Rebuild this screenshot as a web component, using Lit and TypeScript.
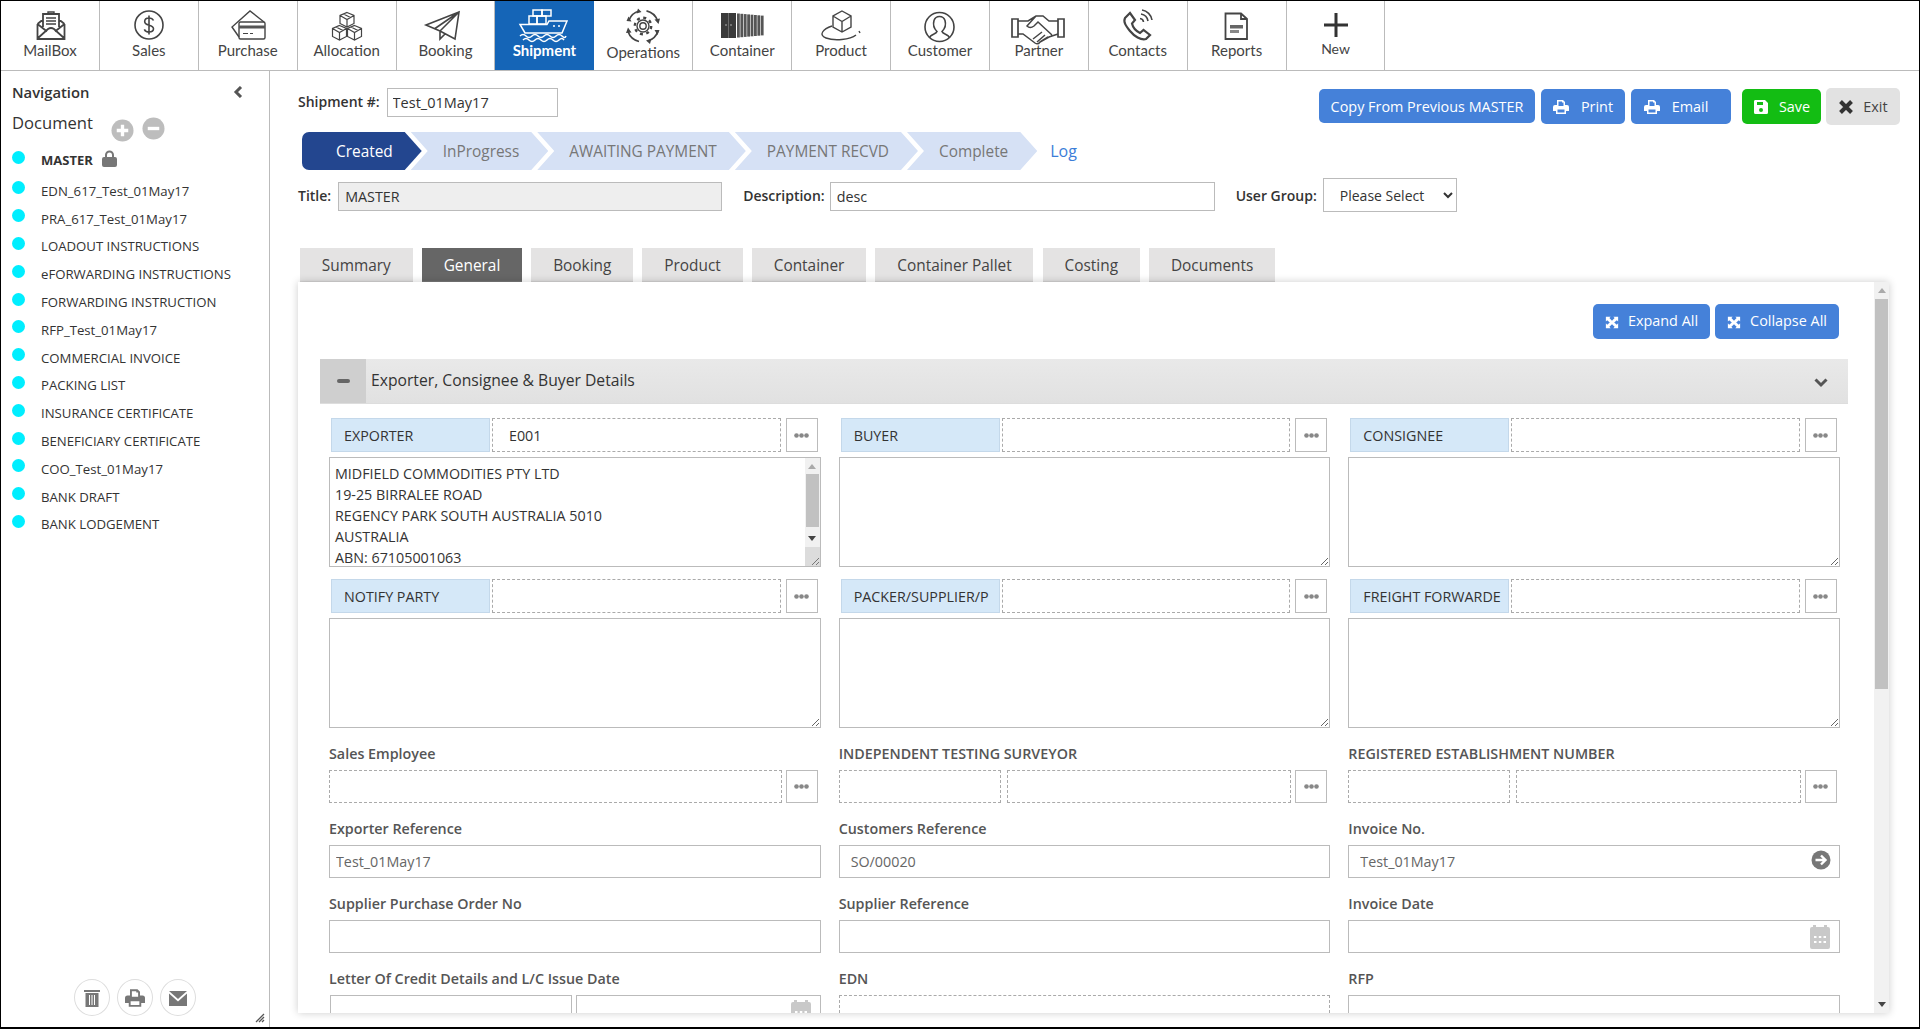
import { LitElement, html, css, svg } from "lit";
import { customElement } from "lit/decorators.js";

const isoBox = (cx: number, cy: number) => svg`<path d="M${cx} ${cy - 7}L${cx + 7} ${cy - 4}V${cy + 4}L${cx} ${cy + 7.5}L${cx - 7} ${cy + 4}V${cy - 4}ZM${cx - 7} ${cy - 4}L${cx} ${cy}L${cx + 7} ${cy - 4}M${cx} ${cy}V${cy + 7.5}M${cx - 3.5} ${cy - 5.5}L${cx + 3.5} ${cy - 2}"/>`;

const navIcons: Record<string, unknown> = {
  MailBox: svg`<path d="M15.5 17V32H42.5V17M15.5 17L21 12.5M42.5 17L37 12.5M15.5 31.5L26 22Q29 20 32 22L42.5 31.5M15.5 17L25 24.5M42.5 17L33 24.5M21 20V7H37V20" stroke-width="1.8"/><path d="M24 11H34M24 14H34M24 17H34" stroke-width="1.4"/><path d="M26 7V5H32V7" stroke-width="1.4"/>`,
  Sales: svg`<circle cx="28" cy="18" r="14"/><path d="M32.5 13.5C31.5 11.5 30 11 28 11C25.5 11 23.7 12.5 23.7 14.5C23.7 19.5 32.5 16.8 32.5 21.8C32.5 23.8 30.5 25 28 25C26 25 24.2 24.2 23.3 22.3M28 8.5V27.5"/>`,
  Purchase: svg`<path d="M19 30L12 20L30 4L44 15" stroke-width="1.4"/><rect x="19" y="15" width="26" height="17" rx="1.5" stroke-width="1.4"/><rect x="19" y="18.5" width="26" height="3" fill="#555" stroke="none"/><path d="M23 26.5H28M30 26.5H33" stroke-width="1.2"/>`,
  Allocation: svg`<g stroke-width="1.2">${isoBox(28, 12.5)}${isoBox(20.5, 25.5)}${isoBox(35.5, 25.5)}</g>`,
  Booking: svg`<path d="M8 18L41 5L37 32L22 24ZM41 5L17 21.5M41 5L22 24V32L27 27"/>`,
  Shipment: svg`<g stroke="#fff" stroke-width="1.5"><rect x="17" y="3" width="9" height="6"/><rect x="26" y="3" width="9" height="6"/><rect x="13" y="9" width="8" height="8"/><rect x="21" y="9" width="9" height="8"/><path d="M4 17.5H31L33 14H51L46 26H9ZM37 19H39M42 19H44"/><path d="M4 29Q7 26 10 29T16 29T22 29T28 29T34 29T40 29T46 29T50 29M7 33Q10 30 13 33T19 33T25 33T31 33T37 33T43 33T48 33"/></g>`,
  Operations: svg`<circle cx="28" cy="19" r="3.2" stroke-width="1.4"/><circle cx="28" cy="19" r="6" stroke-width="1.4"/><circle cx="28" cy="19" r="8.2" stroke-width="2.4" stroke-dasharray="3 3.44"/><g stroke-width="1.7"><path d="M14 13A15.5 15.5 0 0 1 24 4M31.5 3.8A15.5 15.5 0 0 1 42.5 13.5M43 24A15.5 15.5 0 0 1 33 34M24 34.5A15.5 15.5 0 0 1 13 24.5"/></g><path d="M11.5 14L16.5 14.5L13.5 9.5ZM39.5 12.5L45 11.5L43.5 17ZM44.5 23L39.5 23L42.5 28ZM16.5 25.5L11 26L13 20.5ZM23 1.5L26.5 5L21.5 6.5ZM35 37L31 33.5L36.5 31.5Z" fill="#444" stroke="none"/>`,
  Container: svg`<rect x="7" y="6" width="15" height="25" fill="#3a3a3a" stroke="none"/><path d="M14.5 6V31" stroke="#777" stroke-width=".8"/><path d="M11 18H13M16 18H18" stroke="#aaa" stroke-width="1"/>${[23, 26.4, 29.8, 33.2, 36.6, 40, 43.4, 46.8].map((x, i) => svg`<rect x="${x}" y="${6.5 + i * 0.3}" width="2.8" height="${24 - i * 0.6}" fill="#555" stroke="none"/>`)}`,
  Product: svg`<path d="M29 4L38 9V20L29 25L20 20V9ZM20 9L29 14.5L38 9M29 14.5V25" stroke-width="1.4"/><path d="M19 19C10 22 5 28 13 31C21 34 37 33 43 28M46 24L47 26" stroke-width="1.4"/>`,
  Customer: svg`<circle cx="27.5" cy="20" r="14.5"/><path d="M17.5 31C18 27 24 27.5 25 24.5C22 21.5 21 17 22 13.5C23 10.5 25 9.5 27.5 9.5C30 9.5 32 10.5 33 13.5C34 17 33 21.5 30 24.5C31 27.5 37 27 37.5 31"/>`,
  Partner: svg`<path d="M1 12H7V30H1ZM47 12H53V30H47Z" stroke-width="1.7"/><path d="M7 14H17L25 9H32L38 14H47M7 27H12L24 36Q27 38 29 35L38 30L47 27M25 9L16 19Q19 22 23 19L27 15L41 28M22 32L31 25M26 35L34 28M29 35L37 30" stroke-width="1.5"/>`,
  Contacts: svg`<path d="M15 11L20 6L25 13L22 16.5C23 21 26 24 30 26L33.5 23L40 28L36 32C31 33.5 24 29 20 24C16 19 13 15 15 11Z" stroke-width="2.2"/><path d="M30 11.5A4 4 0 0 1 33.5 15M31 7A8.5 8.5 0 0 1 38 14M32 3A12 12 0 0 1 42 13" stroke-width="1.6"/>`,
  Reports: svg`<path d="M16.5 6.5H32L38 12V32H16.5ZM32 6.5V12H38" stroke-width="1.8"/><rect x="21" y="18" width="13" height="3.5" fill="#666" stroke="none"/><rect x="21" y="23" width="9" height="3" fill="#888" stroke="none"/>`,
  New: svg`<path d="M28 6V30M16 18H40" stroke="#333" stroke-width="3"/>`,
};

const navItems = ["MailBox", "Sales", "Purchase", "Allocation", "Booking", "Shipment", "Operations", "Container", "Product", "Customer", "Partner", "Contacts", "Reports", "New"];
const docs = ["EDN_617_Test_01May17", "PRA_617_Test_01May17", "LOADOUT INSTRUCTIONS", "eFORWARDING INSTRUCTIONS", "FORWARDING INSTRUCTION", "RFP_Test_01May17", "COMMERCIAL INVOICE", "PACKING LIST", "INSURANCE CERTIFICATE", "BENEFICIARY CERTIFICATE", "COO_Test_01May17", "BANK DRAFT", "BANK LODGEMENT"];
const steps = ["Created", "InProgress", "AWAITING PAYMENT", "PAYMENT RECVD", "Complete"];
const tabs = ["Summary", "General", "Booking", "Product", "Container", "Container Pallet", "Costing", "Documents"];

const printD = "M4 1H10L12 3V6H14Q16 6 16 8V12H13V15H3V12H0V8Q0 6 2 6H4ZM5.5 2.5V7H10.5V3.5H9V2.5ZM4.5 10.5V13.5H11.5V10.5Z";
const printIcon = html`<svg class="bi" viewBox="0 0 16 16"><path fill="currentColor" fill-rule="evenodd" d=${printD}/></svg>`;
const saveIcon = html`<svg class="bi" viewBox="0 0 16 16"><path fill="currentColor" fill-rule="evenodd" d="M2 1H12L15 4V13.5Q15 15 13.5 15H2.5Q1 15 1 13.5V2.5Q1 1 2 1ZM4 3V6H10V3ZM8 9A2 2 0 1 0 8 13A2 2 0 1 0 8 9Z"/></svg>`;
const expandIcon = html`<svg class="bi ex" viewBox="0 0 16 16"><path fill="currentColor" d="M1 2H6.500L5 3.500L8 6.500L11 3.500L9.500 2H15V7.500L13.500 6L10.500 8.500L13.500 11L15 9.500V15H9.500L11 13.500L8 10.500L5 13.500L6.500 15H1V9.500L2.500 11L5.500 8.500L2.500 6L1 7.500Z"/></svg>`;
const dotsIcon = html`<svg class="dots" viewBox="0 0 15 5"><circle cx="2.5" cy="2.5" r="2.3"/><circle cx="7.5" cy="2.5" r="2.3"/><circle cx="12.5" cy="2.5" r="2.3"/></svg>`;
const calIcon = html`<svg class="cal" viewBox="0 0 20 24"><path fill="#c9c9c9" fill-rule="evenodd" d="M3 0H6V2H14V0H17V2H18Q20 2 20 4V22Q20 24 18 24H2Q0 24 0 22V4Q0 2 2 2H3ZM4 11V13H6.500V11ZM8.800 11V13H11.300V11ZM13.500 11V13H16V11ZM4 16V18H6.500V16ZM8.800 16V18H11.300V16ZM13.500 16V18H16V16Z"/></svg>`;

const addr = "MIDFIELD COMMODITIES PTY LTD\n19-25 BIRRALEE ROAD\nREGENCY PARK SOUTH AUSTRALIA 5010\nAUSTRALIA\nABN: 67105001063";

@customElement("app-root")
export class AppRoot extends LitElement {
  static styles = css`
    :host { display: flex; flex-direction: column; height: 100vh; box-sizing: border-box; overflow: hidden; border: 1px solid #000; border-bottom-width: 2px; background: #fff; font-family: "Open Sans", sans-serif; color: #333; font-size: 14.3px; }
    * { box-sizing: border-box; }
    input, select, textarea { font-family: "Open Sans", sans-serif; font-size: 14.3px; color: #333; outline: none; }
    .topbar { display: flex; height: 70px; flex: none; border-bottom: 1px solid #bbb; }
    .nav { width: 98.9px; flex: none; display: flex; flex-direction: column; align-items: center; border-right: 1px solid #bbb; padding-top: 6px; font-family: Lato, sans-serif; font-size: 15px; color: #444; }
    .nav svg { width: 56px; height: 36px; fill: none; stroke: #444; stroke-width: 1.6; overflow: visible; flex: none; }
    .nav span { line-height: 18px; margin-top: -2px; }
    .nav.on { background: #1565b7; color: #fff; font-weight: 700; border-right-color: #1565b7; }
    .nav.lower span { margin-top: 0; }
    .nav.higher span { margin-top: -3px; font-size: 14px; }
    .body { display: flex; flex: 1; min-height: 0; }
    .side { width: 269px; flex: none; border-right: 1px solid #bbb; display: flex; flex-direction: column; position: relative; }
    .side-h { display: flex; justify-content: space-between; align-items: center; height: 20px; margin: 11px 26px 0 11px; font-size: 14.8px; font-weight: 600; color: #333; }
    .side-h svg { width: 10px; height: 12px; fill: none; stroke: #555; stroke-width: 3; }
    .doc-h { display: flex; align-items: flex-start; height: 32px; margin: 10px 0 0 11px; font-size: 16.6px; line-height: 22px; color: #333; }
    .doc-h svg { width: 23px; height: 23px; margin-top: 7px; flex: none; }
    .doc-h svg.p { margin-left: 18px; margin-right: 8px; }
    .doc-h svg.m { margin-top: 5px; }
    .docs { list-style: none; margin: 2px 0 0 11px; padding: 0; }
    .docs li { display: flex; align-items: center; height: 27.8px; font-size: 13.2px; color: #333; }
    .docs li.master { height: 28px; margin-bottom: 3px; font-weight: 700; font-size: 13px; }
    .dot { width: 13px; height: 13px; border-radius: 50%; background: #0ef; flex: none; margin-right: 16px; transform: translateY(-3px); }
    .lock { width: 15px; height: 17px; margin-left: 9px; transform: translateY(-2px); }
    .side-f { margin-top: auto; display: flex; justify-content: center; gap: 7px; padding-bottom: 11px; }
    .circ { width: 36px; height: 37px; border: 1px solid #ddd; border-radius: 50%; display: flex; align-items: center; justify-content: center; color: #777; }
    .circ svg { width: 20px; height: 20px; }
    .grip { position: absolute; right: 4px; bottom: 4px; width: 10px; height: 10px; }
    .main { flex: 1; min-width: 0; display: flex; flex-direction: column; padding: 17px 19px 14px 28px; }
    .r1 { display: flex; justify-content: space-between; align-items: flex-start; height: 44px; flex: none; }
    .ship { display: flex; align-items: center; font-weight: 600; font-size: 14px; }
    .ship span { margin-top: -3px; }
    .ship input { width: 171px; height: 29px; margin-left: 7px; border: 1px solid #bbb; padding: 0 5px; font-size: 14.5px; font-weight: 400; }
    .btns { display: flex; align-items: flex-start; }
    .btn { display: flex; align-items: center; justify-content: center; height: 35px; border-radius: 5px; background: #4581d9; color: #fff; font-size: 14.4px; margin-top: 1px; margin-left: 6px; white-space: nowrap; }
    .btn.copy { width: 216px; height: 34px; margin-left: 0; }
    .btn.print { width: 84px; gap: 12px; }
    .btn.email { width: 100px; gap: 12px; padding-right: 10px; }
    .btn.save { width: 79px; gap: 10px; background: #13bd13; margin-left: 11px; }
    .btn.exit { width: 74px; height: 37px; gap: 9px; background: #e2e2e2; color: #444; margin-top: 0; margin-left: 5px; }
    .bi { width: 16px; height: 16px; flex: none; }
    .bi.ex { width: 14px; height: 14px; margin-top: 3px; }
    .stepper { display: flex; align-items: center; height: 38px; flex: none; margin-left: 4px; }
    .step { height: 38px; display: flex; align-items: center; padding: 0 29px 0 32px; background: #d6e1f5; color: #777; font-size: 15.4px; margin-right: -11px; clip-path: polygon(0 0, calc(100% - 17px) 0, 100% 50%, calc(100% - 17px) 100%, 0 100%, 17px 50%); white-space: nowrap; }
    .step.on { background: #23468f; color: #fff; border-radius: 7px 0 0 7px; clip-path: polygon(0 0, calc(100% - 17px) 0, 100% 50%, calc(100% - 17px) 100%, 0 100%); padding-left: 34px; }
    .log { margin-left: 24px; color: #3b7dd8; font-size: 16px; }
    .r3 { display: flex; align-items: center; height: 34px; margin-top: 8px; flex: none; font-weight: 600; font-size: 14px; }
    .r3 input { height: 29px; margin-top: 3px; border: 1px solid #bbb; padding: 0 6px; font-weight: 400; }
    .r3 .t { width: 384px; margin-left: 7px; background: #eee; }
    .r3 .dl { margin-left: 21px; }
    .r3 .d { width: 385px; margin-left: 5px; }
    .r3 .gl { margin-left: 21px; }
    .r3 select { width: 134px; height: 34px; margin-left: 6px; border: 1px solid #bbb; background: #fff; padding-left: 12px; font-weight: 400; font-size: 14px; }
    .tabs { display: flex; gap: 9.3px; height: 34px; margin: 36px 0 0 2px; flex: none; }
    .tab { display: flex; align-items: center; padding: 0 21.8px; background: #e4e3e3; font-size: 15.4px; color: #444; box-shadow: inset 0 -2px 2px -2px #aaa; }
    .tab.on { background: #666; color: #fff; }
    .panel { flex: 1; min-height: 0; display: flex; width: 1591px; box-shadow: 0 0 8px rgba(0,0,0,.2); background: #fff; position: relative; }
    .content { flex: 1; min-width: 0; overflow: hidden; padding: 22px 26px 0 22px; }
    .sb { width: 15px; flex: none; background: #f1f1f1; display: flex; flex-direction: column; align-items: center; justify-content: space-between; padding-top: 6px; position: relative; }
    .sb i { width: 0; height: 0; border-left: 4px solid transparent; border-right: 4px solid transparent; }
    .sb .up { border-bottom: 5px solid #aaa; }
    .sb .down { border-top: 5px solid #444; margin-bottom: 6px; }
    .thumb { position: absolute; left: 1px; right: 1px; top: 17px; height: 390px; background: #c1c1c1; }
    .expand { display: flex; justify-content: flex-end; gap: 5px; padding-right: 9px; height: 35px; }
    .expand .btn { margin: 0; gap: 9px; padding-bottom: 3px; }
    .expand .a { width: 117px; }
    .expand .b { width: 124px; }
    .acc { height: 45px; margin-top: 20px; display: flex; align-items: center; background: linear-gradient(#e9e9e9, #e1e1e1); font-size: 15.7px; color: #333; border-bottom: 1px solid #ddd; }
    .acc .mb { width: 46px; height: 100%; background: #cfcfcf; display: flex; align-items: center; justify-content: center; margin-right: 5px; }
    .acc .mb b { width: 13px; height: 4px; border-radius: 2px; background: #666; }
    .acc span { margin-top: -2px; }
    .acc svg { width: 16px; height: 12px; margin-left: auto; margin-right: 19px; fill: none; stroke: #555; stroke-width: 3; margin-top: 4px; }
    .grid-a, .grid-b { display: grid; grid-template-columns: repeat(3, 1fr); column-gap: 18px; margin-left: 9px; margin-right: 8px; }
    .grid-a { row-gap: 12px; margin-top: 14px; }
    .grid-b { row-gap: 16px; margin-top: 16px; }
    .head { display: flex; height: 34px; padding: 0 3px 0 2px; }
    .lab { width: 159px; flex: none; background: #d5e8f8; border: 1px solid #c4d8ea; padding: 0 4px 0 12px; display: flex; align-items: center; white-space: nowrap; color: #333; }
    .dash { flex: 1; min-width: 0; border: 1px dashed #aaa; padding: 0 16px; background: #fff; }
    .head .dash { margin-left: 2px; }
    .mbtn { width: 32px; flex: none; margin-left: 5px; border: 1px solid #bbb; display: flex; align-items: center; justify-content: center; background: #fff; }
    .dots { width: 15px; height: 5px; fill: #888; }
    .ta { position: relative; margin-top: 5px; }
    textarea { display: block; width: 100%; height: 110px; border: 1px solid #bbb; padding: 5px 5px 6px; line-height: 21px; }
    .tsb { position: absolute; top: 1px; right: 1px; bottom: 1px; width: 15px; background: #f1f1f1; display: flex; flex-direction: column; align-items: center; }
    .tsb .u { width: 0; height: 0; margin-top: 6px; border-left: 4px solid transparent; border-right: 4px solid transparent; border-bottom: 5px solid #aaa; }
    .tsb .tt { width: 13px; height: 53px; margin-top: 5px; background: #c1c1c1; }
    .tsb .d { width: 0; height: 0; margin-top: 9px; border-left: 4px solid transparent; border-right: 4px solid transparent; border-top: 5px solid #444; }
    .tsb .c { width: 15px; height: 19px; margin-top: auto; background: #dcdcdc; display: flex; justify-content: flex-end; align-items: flex-end; }
    .tsb .c svg { width: 9px; height: 9px; display: block; }
    .fl { font-weight: 600; font-size: 14.3px; color: #555; height: 20px; line-height: 20px; margin-bottom: 6px; white-space: nowrap; }
    .box { position: relative; display: flex; height: 33px; }
    .box input { flex: 1; min-width: 0; height: 33px; }
    .box .solid { border: 1px solid #bbb; padding: 0 11px; color: #666; background: #fff; }
    .box .solid.tight { padding: 0 6px; }
    .box .dash { color: #666; }
    .box .mbtn { margin-left: 4px; margin-right: 3px; }
    .box .gap { margin-left: 6px; }
    .box .gap4 { margin-left: 4px; }
    .box .s1 { flex: 0 0 162px; }
    .box .l1 { flex: 0 0 242px; margin-left: 1px; }
    .ov { position: absolute; right: 10px; top: 5px; }
    .arrow { width: 20px; height: 20px; right: 9px; top: 5px; }
    .cal { width: 20px; height: 24px; display: block; }
  `;

  private acct(name: string) {
    return html`<div class="head"><div class="lab">${name}</div><input class="dash" value=${name === "EXPORTER" ? "E001" : ""} /><div class="mbtn">${dotsIcon}</div></div>`;
  }

  private solid(label: string, value = "", extra: unknown = null, cls = "") {
    return html`<div><div class="fl">${label}</div><div class="box"><input class="solid ${cls}" value=${value} />${extra}</div></div>`;
  }

  render() {
    const tsb = html`<div class="tsb"><i class="u"></i><div class="tt"></div><i class="d"></i><div class="c"><svg viewBox="0 0 9 9"><path d="M1 8L8 1M5 8L8 5" stroke="#777" stroke-width="1"/></svg></div></div>`;
    return html`
      <div class="topbar">
        ${navItems.map((n) => html`<div class="nav ${n === "Shipment" ? "on" : ""} ${n === "Operations" ? "lower" : ""} ${n === "New" ? "higher" : ""}"><svg viewBox="0 0 56 36">${navIcons[n]}</svg><span>${n}</span></div>`)}
      </div>
      <div class="body">
        <aside class="side">
          <div class="side-h">Navigation<svg viewBox="0 0 10 12"><path d="M8 1L3 6L8 11"/></svg></div>
          <div class="doc-h">Document
            <svg class="p" viewBox="0 0 24 24"><circle cx="12" cy="12" r="11.5" fill="#bdbdbd"/><path d="M12 6V18M6 12H18" stroke="#fff" stroke-width="3.5"/></svg>
            <svg class="m" viewBox="0 0 24 24"><circle cx="12" cy="12" r="11.5" fill="#bdbdbd"/><path d="M6 12H18" stroke="#fff" stroke-width="3.5"/></svg>
          </div>
          <ul class="docs">
            <li class="master"><span class="dot"></span>MASTER<svg class="lock" viewBox="0 0 15 17"><path fill="#777" fill-rule="evenodd" d="M3 7V5A4.5 4.5 0 0 1 12 5V7H13Q15 7 15 9V15Q15 17 13 17H2Q0 17 0 15V9Q0 7 2 7ZM5 7H10V5A2.5 2.5 0 0 0 5 5Z"/></svg></li>
            ${docs.map((d) => html`<li><span class="dot"></span>${d}</li>`)}
          </ul>
          <div class="side-f">
            <div class="circ"><svg viewBox="0 0 20 20"><path fill="#777" fill-rule="evenodd" d="M2 2H18V4H2ZM3.5 5H16.5V19H3.5ZM7 7V17H8V7ZM9.5 7V17H10.5V7ZM12 7V17H13V7Z"/></svg></div>
            <div class="circ"><svg viewBox="0 0 16 16"><path fill="#777" fill-rule="evenodd" d=${printD}/></svg></div>
            <div class="circ"><svg viewBox="0 0 20 20"><path fill="#777" d="M1 3H19L10 11ZM1 5.5V18H19V5.5L10 13.5Z"/></svg></div>
          </div>
          <svg class="grip" viewBox="0 0 10 10"><path d="M1 9L9 1M4 9L9 4M7 9L9 7" stroke="#555" stroke-width="1.3"/></svg>
        </aside>
        <main class="main">
          <div class="r1">
            <div class="ship"><span>Shipment #:</span><input value="Test_01May17" /></div>
            <div class="btns">
              <div class="btn copy">Copy From Previous MASTER</div>
              <div class="btn print">${printIcon}Print</div>
              <div class="btn email">${printIcon}Email</div>
              <div class="btn save">${saveIcon}Save</div>
              <div class="btn exit"><svg class="bi" viewBox="0 0 16 16"><path d="M2.5 2.5L13.5 13.5M13.5 2.5L2.5 13.5" stroke="#333" stroke-width="4"/></svg>Exit</div>
            </div>
          </div>
          <div class="stepper">
            ${steps.map((s, i) => html`<div class="step ${i === 0 ? "on" : ""}">${s}</div>`)}
            <div class="log">Log</div>
          </div>
          <div class="r3">
            Title:<input class="t" value="MASTER" />
            <span class="dl">Description:</span><input class="d" value="desc" />
            <span class="gl">User Group:</span><select><option>Please Select</option></select>
          </div>
          <div class="tabs">${tabs.map((t) => html`<div class="tab ${t === "General" ? "on" : ""}">${t}</div>`)}</div>
          <div class="panel">
            <div class="content">
              <div class="expand">
                <div class="btn a">${expandIcon}Expand All</div>
                <div class="btn b">${expandIcon}Collapse All</div>
              </div>
              <div class="acc"><div class="mb"><b></b></div><span>Exporter, Consignee &amp; Buyer Details</span><svg viewBox="0 0 16 12"><path d="M2.5 2.5L8 8L13.5 2.5"/></svg></div>
              <div class="grid-a">
                ${["EXPORTER", "BUYER", "CONSIGNEE", "NOTIFY PARTY", "PACKER/SUPPLIER/P", "FREIGHT FORWARDE"].map((n) => html`<div>${this.acct(n)}<div class="ta"><textarea .value=${n === "EXPORTER" ? addr : ""}></textarea>${n === "EXPORTER" ? tsb : null}</div></div>`)}
              </div>
              <div class="grid-b">
                <div><div class="fl">Sales Employee</div><div class="box"><input class="dash" /><div class="mbtn">${dotsIcon}</div></div></div>
                <div><div class="fl">INDEPENDENT TESTING SURVEYOR</div><div class="box"><input class="dash s1" /><input class="dash gap" /><div class="mbtn">${dotsIcon}</div></div></div>
                <div><div class="fl">REGISTERED ESTABLISHMENT NUMBER</div><div class="box"><input class="dash s1" /><input class="dash gap" /><div class="mbtn">${dotsIcon}</div></div></div>
                ${this.solid("Exporter Reference", "Test_01May17", null, "tight")}
                ${this.solid("Customers Reference", "SO/00020")}
                ${this.solid("Invoice No.", "Test_01May17", html`<svg class="ov arrow" viewBox="0 0 20 20"><circle cx="10" cy="10" r="9.5" fill="#777"/><path d="M4.5 10H14M10 5.5L14.5 10L10 14.5" fill="none" stroke="#fff" stroke-width="2.4"/></svg>`)}
                ${this.solid("Supplier Purchase Order No")}
                ${this.solid("Supplier Reference")}
                ${this.solid("Invoice Date", "", html`<div class="ov">${calIcon}</div>`)}
                <div><div class="fl">Letter Of Credit Details and L/C Issue Date</div><div class="box"><input class="solid l1" /><input class="solid gap4" /><div class="ov">${calIcon}</div></div></div>
                <div><div class="fl">EDN</div><div class="box"><input class="dash" /></div></div>
                ${this.solid("RFP")}
              </div>
            </div>
            <div class="sb"><i class="up"></i><div class="thumb"></div><i class="down"></i></div>
          </div>
        </main>
      </div>
    `;
  }
}
